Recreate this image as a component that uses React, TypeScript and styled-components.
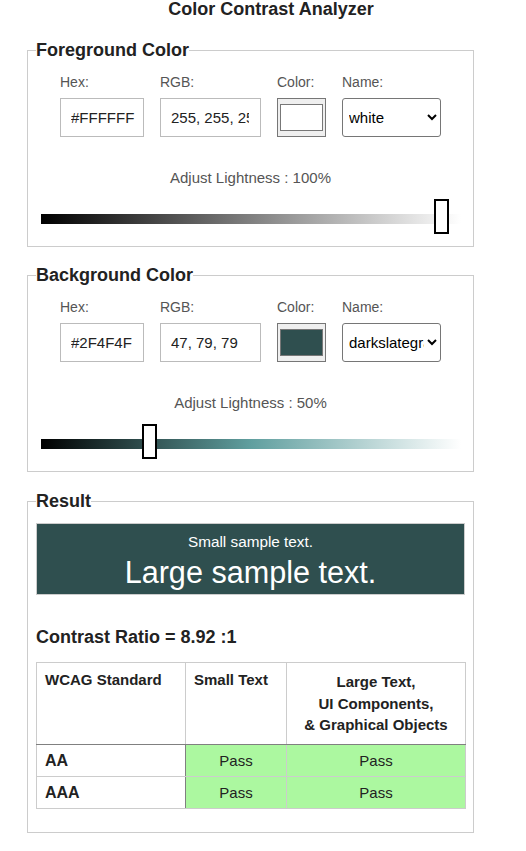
import React from "react";
import styled, { createGlobalStyle } from "styled-components";

const GlobalStyle = createGlobalStyle`
  html, body { margin: 0; padding: 0; background: #fff; }
  body { font-family: "Liberation Sans", Arial, sans-serif; color: #222; }
  *, *::before, *::after { box-sizing: border-box; }
`;

const Page = styled.div`
  width: 526px;
  padding-bottom: 18px;
`;

const Title = styled.h1`
  margin: 0 0 22px 16px;
  font-size: 18px;
  line-height: 18px;
  font-weight: bold;
  text-align: center;
  color: #222;
`;

const Panel = styled.fieldset<{ $top: number; $bottom: number; $padTop: number }>`
  width: 447px;
  min-width: 0;
  margin: ${(p) => p.$top}px 0 0 27px;
  padding: ${(p) => p.$padTop}px 8px ${(p) => p.$bottom}px 8px;
  border: 1px solid #ccc;
`;

const PanelTitle = styled.legend`
  padding: 0;
  font-size: 18px;
  line-height: 20px;
  font-weight: bold;
  color: #222;
`;

const FieldRow = styled.div`
  display: flex;
  justify-content: center;
  gap: 16px;
`;

const Field = styled.label`
  display: flex;
  flex-direction: column;
`;

const FieldLabel = styled.span`
  font-size: 14px;
  line-height: 16px;
  color: #555;
  margin-bottom: 8px;
`;

const TextInput = styled.input<{ $w: number; $padRight: number }>`
  width: ${(p) => p.$w}px;
  height: 39px;
  margin: 0;
  padding: 0 ${(p) => p.$padRight}px 0 10px;
  border: 1px solid #bbb;
  border-radius: 0;
  background: #fff;
  font-family: "Liberation Sans", Arial, sans-serif;
  font-size: 15px;
  color: #222;
  outline: none;
`;

const ColorInput = styled.input`
  width: 49px;
  height: 39px;
  margin: 0;
  border: 1px solid #767676;
  background: #efefef;
  padding: 1px 0;
`;

const NameSelect = styled.select`
  width: 99px;
  height: 39px;
  margin: 0;
  padding: 0 0 0 2px;
  border: 1px solid #767676;
  border-radius: 3px;
  background: #fff;
  font-family: "Liberation Sans", Arial, sans-serif;
  font-size: 15px;
  color: #000;
`;

const LightnessLabel = styled.div`
  margin-top: 32px;
  text-align: center;
  font-size: 15px;
  line-height: 17px;
  color: #555;
`;

const SliderWrap = styled.div`
  position: relative;
  width: 420px;
  height: 35px;
  margin: 13px auto 0;
  padding-top: 15px;
`;

const Track = styled.div<{ $mid: string }>`
  height: 10px;
  background: linear-gradient(to right, #000 0%, ${(p) => p.$mid} 50%, #fff 100%);
`;

const Thumb = styled.div`
  position: absolute;
  top: 0;
  width: 15px;
  height: 35px;
  border: 2px solid #000;
  background: #fff;
`;

const SampleBox = styled.div`
  border: 1px solid #ccc;
  background: #2f4f4f;
  color: #fff;
  text-align: center;
  padding-top: 9px;
`;

const SmallSample = styled.div`
  font-size: 15.3px;
  line-height: 18px;
`;

const LargeSample = styled.div`
  font-size: 30.6px;
  line-height: 43px;
`;

const Ratio = styled.div`
  margin: 32px 0 14px;
  font-size: 18px;
  line-height: 21px;
  font-weight: bold;
  color: #222;
`;

const Table = styled.table`
  width: 429px;
  border-collapse: collapse;
  table-layout: fixed;
`;

const HeadCell = styled.th<{ $wide?: boolean }>`
  padding: 8px;
  font-size: 15px;
  font-weight: bold;
  line-height: ${(p) => (p.$wide ? "21.5px" : "17px")};
  text-align: ${(p) => (p.$wide ? "center" : "left")};
  vertical-align: top;
  color: #222;
  border: 1px solid #ccc;
  border-bottom: 1px solid #808080;
`;

const LevelCell = styled.td`
  padding: 6px 8px;
  font-size: 16px;
  font-weight: bold;
  line-height: 19px;
  color: #222;
  border: 1px solid #ccc;
  border-right: 1px solid #808080;
`;

const PassCell = styled.td`
  padding: 6px 8px;
  font-size: 15px;
  line-height: 19px;
  text-align: center;
  color: #222;
  background: #acf8a0;
  border: 1px solid #ccc;
`;

type ColorPanel = {
  title: string;
  hex: string;
  rgb: string;
  name: string;
  options: string[];
  lightness: number;
  thumb: number;
  mid: string;
  top: number;
};

const panels: ColorPanel[] = [
  {
    title: "Foreground Color",
    hex: "#FFFFFF",
    rgb: "255, 255, 255",
    name: "white",
    options: ["white", "darkslategray", "black"],
    lightness: 100,
    thumb: 100,
    mid: "#808080",
    top: 0,
  },
  {
    title: "Background Color",
    hex: "#2F4F4F",
    rgb: "47, 79, 79",
    name: "darkslategray",
    options: ["white", "darkslategray", "black"],
    lightness: 50,
    thumb: 25.8,
    mid: "#609f9f",
    top: 18,
  },
];

const rows = [
  { level: "AA", small: "Pass", large: "Pass" },
  { level: "AAA", small: "Pass", large: "Pass" },
];

function ColorFieldset({ p }: { p: ColorPanel }) {
  return (
    <Panel $top={p.top} $bottom={12} $padTop={14}>
      <PanelTitle>{p.title}</PanelTitle>
      <FieldRow>
        <Field>
          <FieldLabel>Hex:</FieldLabel>
          <TextInput $w={84} $padRight={4} defaultValue={p.hex} />
        </Field>
        <Field>
          <FieldLabel>RGB:</FieldLabel>
          <TextInput $w={101} $padRight={11} defaultValue={p.rgb} />
        </Field>
        <Field>
          <FieldLabel>Color:</FieldLabel>
          <ColorInput type="color" defaultValue={p.hex.toLowerCase()} />
        </Field>
        <Field>
          <FieldLabel>Name:</FieldLabel>
          <NameSelect defaultValue={p.name}>
            {p.options.map((o) => (
              <option key={o} value={o}>
                {o}
              </option>
            ))}
          </NameSelect>
        </Field>
      </FieldRow>
      <LightnessLabel>Adjust Lightness : {p.lightness}%</LightnessLabel>
      <SliderWrap>
        <Track $mid={p.mid} />
        <Thumb style={{ left: `${(p.thumb / 100) * 393}px` }} />
      </SliderWrap>
    </Panel>
  );
}

export default function App() {
  return (
    <Page>
      <GlobalStyle />
      <Title>Color Contrast Analyzer</Title>
      {panels.map((p) => (
        <ColorFieldset key={p.title} p={p} />
      ))}
      <Panel $top={19} $bottom={23} $padTop={12}>
        <PanelTitle>Result</PanelTitle>
        <SampleBox>
          <SmallSample>Small sample text.</SmallSample>
          <LargeSample>Large sample text.</LargeSample>
        </SampleBox>
        <Ratio>Contrast Ratio = 8.92 :1</Ratio>
        <Table>
          <colgroup>
            <col style={{ width: 149 }} />
            <col style={{ width: 101 }} />
            <col style={{ width: 179 }} />
          </colgroup>
          <thead>
            <tr>
              <HeadCell>WCAG Standard</HeadCell>
              <HeadCell>Small Text</HeadCell>
              <HeadCell $wide>
                Large Text,
                <br />
                UI Components,
                <br />
                &amp; Graphical Objects
              </HeadCell>
            </tr>
          </thead>
          <tbody>
            {rows.map((r) => (
              <tr key={r.level}>
                <LevelCell>{r.level}</LevelCell>
                <PassCell>{r.small}</PassCell>
                <PassCell>{r.large}</PassCell>
              </tr>
            ))}
          </tbody>
        </Table>
      </Panel>
    </Page>
  );
}
